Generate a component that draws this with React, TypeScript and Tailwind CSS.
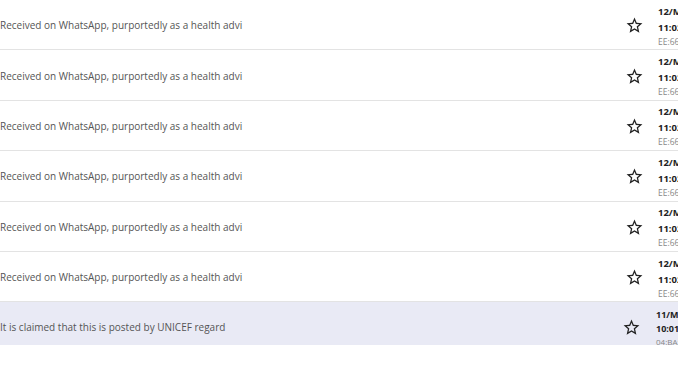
import { MdStarBorder } from "react-icons/md";

type Row = {
  text: string;
  date: string;
  time: string;
  mac: string;
  active?: boolean;
};

const rows: Row[] = [
  ...Array.from({ length: 6 }, () => ({
    text: "Received on WhatsApp, purportedly as a health advi",
    date: "12/Mar/2020",
    time: "11:02:35",
    mac: "EE:66:1A:3C",
  })),
  {
    text: "It is claimed that this is posted by UNICEF regard",
    date: "11/Mar/2020",
    time: "10:01:12",
    mac: "04:BA:8D:11",
    active: true,
  },
];

// the date column runs past the right edge of the window, as in the list it was cut from
const App = () => {
  return (
    <div className="h-[381px] w-[678px] overflow-hidden bg-white font-['Open_Sans',sans-serif]">
      {rows.map((r, i) =>
        r.active ? (
          <div key={i} className="flex h-[43px] w-[726px] items-center bg-[#e9eaf5] pt-[8px]">
            <p className="flex-1 truncate text-[10px] text-[#555]">{r.text}</p>
            <MdStarBorder className="mr-[15px] shrink-0 text-[19px] text-[#222]" />
            <div className="w-[70px] shrink-0">
              <div className="text-[9px] leading-[14px] font-bold text-[#222]">{r.date}</div>
              <div className="text-[9px] leading-[14px] font-bold text-[#222]">{r.time}</div>
              <div className="text-[8px] leading-[11px] text-[#888]">{r.mac}</div>
            </div>
          </div>
        ) : (
          <div
            key={i}
            className="flex h-[50.4px] w-[728px] items-center border-b border-[#e3e3e3] pt-[2px]"
          >
            <p className="flex-1 truncate text-[10px] text-[#555]">{r.text}</p>
            <MdStarBorder className="mr-[14px] shrink-0 text-[19px] text-[#222]" />
            <div className="w-[70px] shrink-0">
              <div className="text-[9.5px] leading-[16px] font-bold text-[#222]">{r.date}</div>
              <div className="text-[9.5px] leading-[16px] font-bold text-[#222]">{r.time}</div>
              <div className="text-[8.5px] leading-[12px] text-[#888]">{r.mac}</div>
            </div>
          </div>
        )
      )}
    </div>
  );
};

export default App;
